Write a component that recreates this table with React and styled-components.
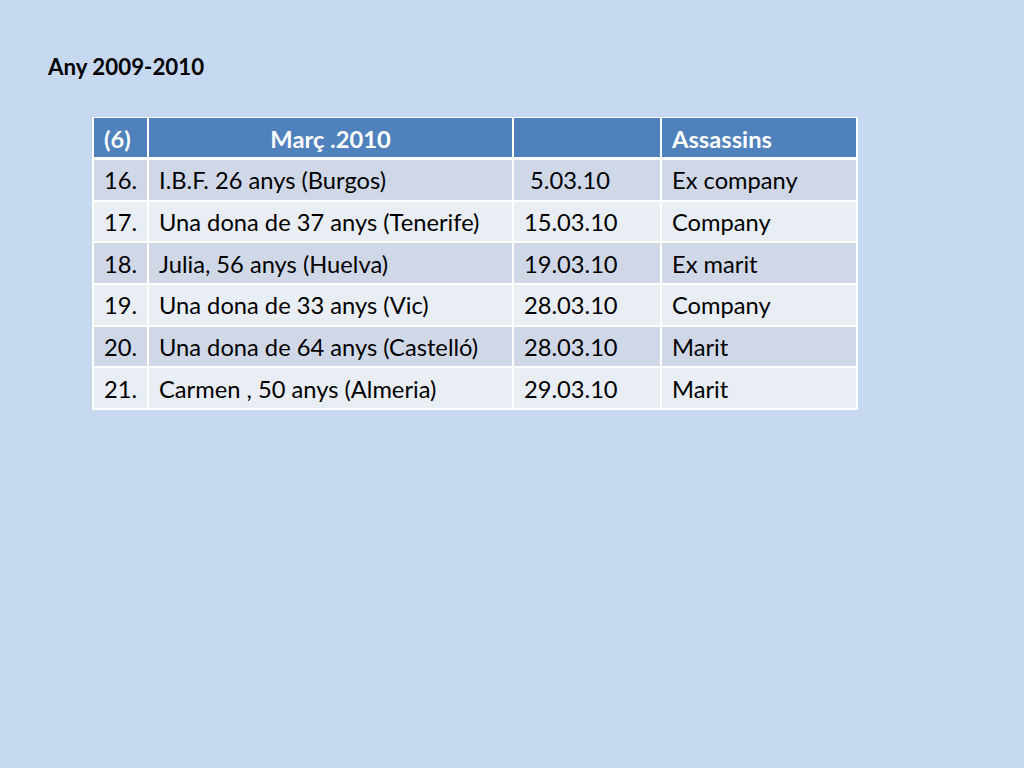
import React from "react";
import styled, { createGlobalStyle } from "styled-components";

const Global = createGlobalStyle`
  html, body { margin: 0; padding: 0; }
  body {
    background: #c6d9f1;
    font-family: Lato, "Open Sans", "Liberation Sans", sans-serif;
  }
`;

const Slide = styled.div`
  width: 1024px;
  height: 768px;
  background: #c6d9f1;
  box-sizing: border-box;
  padding: 52px 0 0 48px;
`;

const Title = styled.h1`
  margin: 0;
  font-size: 22.3px;
  font-weight: 700;
  line-height: 30px;
  color: #000;
`;

const Table = styled.table`
  margin: 35px 0 0 44px;
  border-collapse: collapse;
  table-layout: fixed;
  width: 764px;
  font-size: 23.7px;
`;

const HeadCell = styled.th`
  background: #4f81bd;
  color: #fff;
  font-weight: 700;
  text-align: ${(p) => (p.$center ? "center" : "left")};
  padding: 3px 10px 0;
  height: 36px;
  border: 2px solid #fff;
  border-top-width: 1px;
  border-bottom-width: 3px;
  white-space: pre;
`;

const Row = styled.tr`
  background: ${(p) => (p.$dark ? "#d0d8e8" : "#e9edf4")};
`;

const Cell = styled.td`
  color: #000;
  padding: 1px 10px 0;
  height: 38.7px;
  border: 2px solid #fff;
  white-space: pre;
`;

const rows = [
  ["16.", "I.B.F. 26 anys (Burgos)", " 5.03.10", "Ex company"],
  ["17.", "Una dona de 37 anys (Tenerife)", "15.03.10", "Company"],
  ["18.", "Julia, 56 anys (Huelva)", "19.03.10", "Ex marit"],
  ["19.", "Una dona de 33 anys (Vic)", "28.03.10", "Company"],
  ["20.", "Una dona de 64 anys (Castelló)", "28.03.10", "Marit"],
  ["21.", "Carmen , 50 anys (Almeria)", "29.03.10", "Marit"],
];

export default function App() {
  return (
    <>
      <Global />
      <Slide>
        <Title>Any 2009-2010</Title>
        <Table>
          <colgroup>
            <col style={{ width: 55 }} />
            <col style={{ width: 365 }} />
            <col style={{ width: 148 }} />
            <col style={{ width: 196 }} />
          </colgroup>
          <thead>
            <tr>
              <HeadCell>(6)</HeadCell>
              <HeadCell $center>Març .2010</HeadCell>
              <HeadCell></HeadCell>
              <HeadCell>Assassins</HeadCell>
            </tr>
          </thead>
          <tbody>
            {rows.map((r, i) => (
              <Row key={r[0]} $dark={i % 2 === 0}>
                {r.map((c, j) => (
                  <Cell key={j}>{c}</Cell>
                ))}
              </Row>
            ))}
          </tbody>
        </Table>
      </Slide>
    </>
  );
}
